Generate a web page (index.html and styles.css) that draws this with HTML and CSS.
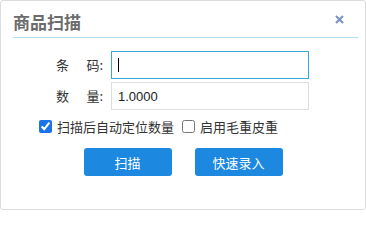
FILE: index.html
```html
<!DOCTYPE html>
<html lang="zh-CN">
<head>
<meta charset="utf-8">
<title>商品扫描</title>
<link rel="stylesheet" href="styles.css">
</head>
<body>
<div class="dialog">
  <div class="header">
    <div class="title">商品扫描</div>
    <svg class="close" width="9" height="9" viewBox="0 0 9 9" aria-label="关闭">
      <path d="M1 1 L8 8 M8 1 L1 8" stroke="#7d93c4" stroke-width="2.2" stroke-linecap="butt"/>
    </svg>
  </div>
  <div class="form">
    <div class="row">
      <div class="label"><span>条</span><span>码:</span></div>
      <div class="field focused"><span class="caret"></span></div>
    </div>
    <div class="row">
      <div class="label"><span>数</span><span>量:</span></div>
      <div class="field"><span class="value">1.0000</span></div>
    </div>
  </div>
  <div class="checks">
    <label class="check"><input type="checkbox" checked><span>扫描后自动定位数量</span></label>
    <label class="check"><input type="checkbox"><span>启用毛重皮重</span></label>
  </div>
  <div class="buttons">
    <button class="btn">扫描</button>
    <button class="btn">快速录入</button>
  </div>
</div>
</body>
</html>
```
FILE: styles.css
```css
html, body {
  margin: 0;
  padding: 0;
  background: #ffffff;
}
body {
  font-family: "Noto Sans CJK SC", "Noto Sans", sans-serif;
  color: #333333;
}
.dialog {
  width: 366px;
  height: 210px;
  box-sizing: border-box;
  border: 1px solid #dcdcdc;
  border-radius: 3px;
  background: #fff;
}
.header {
  display: flex;
  align-items: center;
  justify-content: space-between;
  height: 37px;
  box-sizing: border-box;
  padding-top: 6px;
  margin: 0 7px 0 12px;
  border-bottom: 1px solid #b3dff2;
}
.title {
  font-size: 17px;
  font-weight: bold;
  line-height: 20px;
  color: #6b6b6b;
}
.close {
  display: block;
  margin-right: 14px;
  margin-bottom: 6px;
}
.form {
  display: flex;
  flex-direction: column;
  gap: 3px;
  margin-top: 13px;
  padding-left: 55px;
}
.row {
  display: flex;
  align-items: center;
  gap: 8px;
}
.label {
  width: 47px;
  display: flex;
  justify-content: space-between;
  font-size: 13px;
  line-height: 16px;
  color: #333;
}
.field {
  width: 198px;
  height: 28px;
  box-sizing: border-box;
  border: 1px solid #dddddd;
  display: flex;
  align-items: center;
  padding-left: 6px;
  position: relative;
}
.field.focused {
  border-color: #3aa5d8;
}
.caret {
  display: block;
  width: 1px;
  height: 14px;
  background: #000;
}
.value {
  font-family: "Liberation Sans", Arial, sans-serif;
  font-size: 13px;
  color: #222;
}
.checks {
  display: flex;
  align-items: center;
  gap: 8px;
  height: 17px;
  margin-top: 8px;
  padding-left: 38px;
}
.check {
  display: flex;
  align-items: center;
  gap: 5px;
  font-size: 13px;
  line-height: 17px;
  color: #333;
}
.check input {
  margin: 0;
  width: 13px;
  height: 13px;
  accent-color: #1a73e8;
}
.buttons {
  display: flex;
  justify-content: center;
  gap: 23px;
  margin-top: 13px;
}
.btn {
  width: 88px;
  height: 28px;
  border: none;
  border-radius: 3px;
  background: #1c88e0;
  color: #fff;
  font-family: "Noto Sans CJK SC", sans-serif;
  font-size: 13px;
  padding: 0;
}
```
